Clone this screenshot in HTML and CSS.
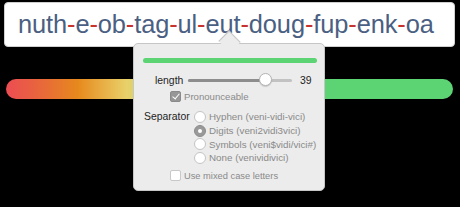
FILE: index.html
```html
<!DOCTYPE html>
<html lang="en">
  <head>
    <meta charset="utf-8" />
    <title>Password Generator</title>
    <link rel="stylesheet" href="styles.css">
  </head>
  <body>
    <div class="password-field">
      <span class="password-text">nuth<i>-</i>e<i>-</i>ob<i>-</i>tag<i>-</i>ul<i>-</i>eut<i>-</i>doug<i>-</i>fup<i>-</i>enk<i>-</i>oa</span>
    </div>
    <div class="strength-bar"></div>

    <div class="popover">
      <div class="popover-arrow"></div>
      <div class="popover-strength"></div>
      <div class="row length-row">
        <span class="label">length</span>
        <div class="slider">
          <div class="slider-fill"></div>
          <div class="slider-thumb"></div>
        </div>
        <span class="length-value">39</span>
      </div>
      <div class="row check-row pronounce-row">
        <span class="checkbox checked"></span>
        <span class="option">Pronounceable</span>
      </div>
      <div class="separator-group">
        <span class="label">Separator</span>
        <div class="radio-list">
          <div class="row"><span class="radio"></span><span class="option">Hyphen (veni-vidi-vici)</span></div>
          <div class="row"><span class="radio selected"></span><span class="option">Digits (veni2vidi3vici)</span></div>
          <div class="row"><span class="radio"></span><span class="option">Symbols (veni$vidi/vici#)</span></div>
          <div class="row"><span class="radio"></span><span class="option">None (venividivici)</span></div>
        </div>
      </div>
      <div class="row check-row mixed-row">
        <span class="checkbox"></span>
        <span class="option">Use mixed case letters</span>
      </div>
    </div>
  </body>
</html>
```

FILE: styles.css
```css
:root {
    --green: #5cd474;
    --popover-bg: #ececec;
    --popover-border: #c6c6c6;
    --option-grey: #8a8a8a;
}
html, body {
    margin: 0;
    padding: 0;
    background: #000;
    font-family: "Liberation Sans", Arial, sans-serif;
}
body {
    position: relative;
    width: 460px;
    height: 207px;
    overflow: hidden;
    padding-top: 2px;
    box-sizing: border-box;
}

.password-field {
    margin: 0 5px 0 4px;
    height: 45px;
    box-sizing: border-box;
    background: #fff;
    border: 1px solid #d0d0d0;
    border-radius: 4px;
    display: flex;
    align-items: center;
    padding: 0 0 1px 13px;
}
.password-text {
    font-size: 25.4px;
    color: #4b5f82;
    letter-spacing: -0.1px;
    white-space: nowrap;
}
.password-text i {
    font-style: normal;
    color: #c6322e;
}

.strength-bar {
    margin: 32px 7px 0 6px;
    height: 20px;
    border-radius: 10px;
    background: linear-gradient(to right, #ec4c53 0%, #e8683a 8%, #e6891d 16%, #e9d16a 27%, var(--green) 45%, var(--green) 100%);
}

.popover {
    position: absolute;
    left: 133px;
    top: 43px;
    width: 192px;
    height: 148px;
    box-sizing: border-box;
    background: var(--popover-bg);
    border: 1px solid var(--popover-border);
    border-radius: 5px;
    padding: 14px 8px 0 8px;
    font-size: 10.4px;
    color: #1e1e1e;
}
.popover-arrow {
    position: absolute;
    left: 88px;
    top: -10px;
    width: 14px;
    height: 14px;
    background: var(--popover-bg);
    border-left: 1px solid var(--popover-border);
    border-top: 1px solid var(--popover-border);
    transform: rotate(45deg) scaleX(1.1);
}
.popover-strength {
    height: 5px;
    border-radius: 3px;
    background: var(--green);
    margin: 0 0 0 1px;
    width: 174px;
}

.row {
    display: flex;
    align-items: center;
    white-space: nowrap;
}
.length-row {
    height: 16px;
    margin-top: 9px;
    padding-left: 13px;
}
.length-row .label {
    width: 33px;
}
.slider {
    position: relative;
    width: 104px;
    height: 3px;
    border-radius: 2px;
    background: #c2c2c2;
}
.slider-fill {
    width: 78px;
    height: 100%;
    border-radius: 2px;
    background: #8d8d8d;
}
.slider-thumb {
    position: absolute;
    left: 71px;
    top: -6px;
    width: 13px;
    height: 13px;
    box-sizing: border-box;
    border-radius: 50%;
    background: #fff;
    border: 1px solid #b4b4b4;
    box-shadow: 0 1px 1px rgba(0, 0, 0, 0.15);
}
.length-value {
    margin-left: 8px;
}

.option {
    color: var(--option-grey);
    font-size: 9.8px;
}
.checkbox {
    flex: none;
    width: 11px;
    height: 11px;
    box-sizing: border-box;
    border-radius: 2px;
    background: #fff;
    border: 1px solid #c8c8c8;
    margin-right: 3px;
    position: relative;
}
.checkbox.checked {
    background: #979797;
    border-color: #8a8a8a;
}
.checkbox.checked::after {
    content: "";
    position: absolute;
    left: 3px;
    top: 0;
    width: 3px;
    height: 6px;
    border-right: 1.5px solid #fff;
    border-bottom: 1.5px solid #fff;
    transform: rotate(40deg);
}
.pronounce-row {
    height: 14px;
    margin-top: 1px;
    padding-left: 28px;
}
.pronounce-row .option {
    font-size: 9.6px;
}

.separator-group {
    display: flex;
    margin-top: 7px;
    padding-left: 2px;
}
.separator-group .label {
    flex: none;
    width: 50px;
    line-height: 14px;
}
.radio-list {
    flex: none;
}
.radio-list .row {
    height: 13.7px;
}
.radio {
    flex: none;
    width: 12px;
    height: 12px;
    box-sizing: border-box;
    border-radius: 50%;
    background: #fff;
    border: 1px solid #c4c4c4;
    margin-right: 3px;
    position: relative;
}
.radio.selected {
    background: #999;
    border-color: #8c8c8c;
}
.radio.selected::after {
    content: "";
    position: absolute;
    left: 3px;
    top: 3px;
    width: 4px;
    height: 4px;
    border-radius: 50%;
    background: #fff;
}
.mixed-row {
    margin-top: 4px;
    padding-left: 28px;
    height: 14px;
}
.mixed-row .option {
    font-size: 9.3px;
}
```
